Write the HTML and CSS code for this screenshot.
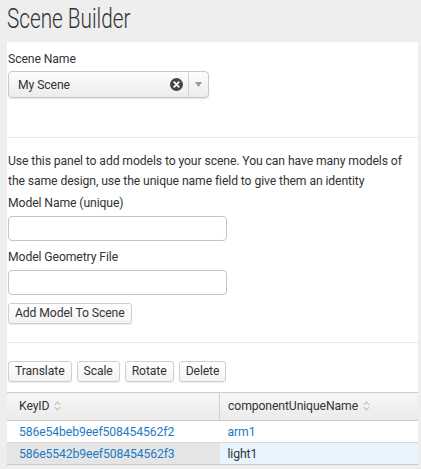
FILE: index.html
```html
<!DOCTYPE html>
<html>
<head>
<meta charset="utf-8">
<link rel="stylesheet" href="styles.css">
</head>
<body>
<header class="top">
  <h1 class="title">Scene Builder</h1>
</header>
<main class="panel">
  <section class="sec sec-scene">
    <label class="lbl">Scene Name</label>
    <div class="select">
      <span class="select-value">My Scene</span>
      <span class="select-clear">
        <svg width="13" height="13" viewBox="0 0 13 13"><circle cx="6.5" cy="6.5" r="6.5" fill="#444"/><path d="M4.2 4.2 L8.8 8.8 M8.8 4.2 L4.2 8.8" stroke="#fff" stroke-width="1.8" stroke-linecap="round"/></svg>
      </span>
      <span class="select-arrow">
        <svg width="7" height="5" viewBox="0 0 7 5"><path d="M0 0 H7 L3.5 5 Z" fill="#999"/></svg>
      </span>
    </div>
  </section>
  <section class="sec sec-model">
    <p class="desc">Use this panel to add models to your scene. You can have many models of the same design, use the unique name field to give them an identity</p>
    <label class="lbl">Model Name (unique)</label>
    <input class="inp" type="text">
    <label class="lbl">Model Geometry File</label>
    <input class="inp" type="text">
    <button class="btn">Add Model To Scene</button>
  </section>
  <section class="sec sec-table">
    <div class="btns">
      <button class="btn">Translate</button>
      <button class="btn">Scale</button>
      <button class="btn">Rotate</button>
      <button class="btn">Delete</button>
    </div>
    <table class="tbl">
      <thead>
        <tr>
          <th class="c1">KeyID <span class="sort"><svg width="7" height="10" viewBox="0 0 7 10"><path d="M0.8 4 L3.5 1 L6.2 4 M0.8 6 L3.5 9 L6.2 6" fill="none" stroke="#bbb" stroke-width="1.1"/></svg></span></th>
          <th class="c2">componentUniqueName <span class="sort"><svg width="7" height="10" viewBox="0 0 7 10"><path d="M0.8 4 L3.5 1 L6.2 4 M0.8 6 L3.5 9 L6.2 6" fill="none" stroke="#bbb" stroke-width="1.1"/></svg></span></th>
        </tr>
      </thead>
      <tbody>
        <tr>
          <td class="c1 link">586e54beb9eef508454562f2</td>
          <td class="c2 link">arm1</td>
        </tr>
        <tr class="sel">
          <td class="c1 link">586e5542b9eef508454562f3</td>
          <td class="c2">light1</td>
        </tr>
      </tbody>
    </table>
  </section>
</main>
</body>
</html>
```

FILE: styles.css
```css
html, body {
  margin: 0;
  padding: 0;
}
body {
  background: #eeeeee;
  font-family: Roboto, "Liberation Sans", sans-serif;
  font-size: 12.2px;
  letter-spacing: -0.1px;
  color: #333;
  height: 469px;
  overflow: hidden;
}
.top {
  height: 42px;
  padding: 0 7px;
}
.title {
  margin: 0;
  font-size: 28px;
  font-weight: 300;
  line-height: 38px;
  letter-spacing: 0;
  color: #333;
  transform: scaleX(0.74);
  transform-origin: left center;
}
.panel {
  background: #fff;
  margin: 0 3px 0 7px;
}
.sec {
  display: flex;
  flex-direction: column;
  align-items: flex-start;
  padding: 0 0 0 1px;
}
.sec-scene {
  padding-top: 9px;
  height: 86px;
  border-bottom: 1px solid #ececec;
}
.lbl {
  display: block;
  line-height: 16px;
  margin-bottom: 4px;
  color: #333;
}
.select {
  width: 199px;
  height: 25px;
  border: 1px solid #c8c8c8;
  border-radius: 4px;
  background: linear-gradient(#fdfdfd, #ececec);
  box-shadow: 0 1px 1px rgba(0,0,0,0.12);
  display: flex;
  align-items: center;
  box-sizing: content-box;
}
.select-value {
  flex: 1;
  padding-left: 9px;
  color: #333;
}
.select-clear {
  display: flex;
  width: 13px;
  height: 13px;
  margin-right: 5px;
}
.select-arrow {
  display: flex;
  align-items: center;
  justify-content: center;
  width: 19px;
  height: 25px;
  border-left: 1px solid #d2d2d2;
}
.sec-model {
  padding-top: 13px;
  height: 191px;
  border-bottom: 1px solid #ececec;
}
.desc {
  margin: 0 0 4px 0;
  line-height: 20px;
  color: #333;
}
.sec-model .lbl {
  margin-bottom: 5px;
}
.inp {
  width: 219px;
  height: 25px;
  box-sizing: border-box;
  border: 1px solid #c4c4c4;
  border-radius: 4px;
  background: #fff;
  margin: 0 0 8px 0;
  padding: 0 6px;
  font: inherit;
}
.btn {
  font-family: Roboto, "Liberation Sans", sans-serif;
  font-size: 12.2px;
  letter-spacing: -0.1px;
  color: #333;
  height: 21px;
  padding: 0 6px;
  border: 1px solid #cfcfcf;
  border-radius: 3px;
  background: linear-gradient(#ffffff, #f3f3f3);
  box-shadow: 0 1px 1px rgba(0,0,0,0.08);
  line-height: 19px;
}
.sec-table {
  padding-top: 18px;
  padding-left: 0;
}
.btns {
  display: flex;
  gap: 5px;
  padding-left: 1px;
  margin-bottom: 10px;
}
.tbl {
  width: 411px;
  border-collapse: collapse;
  margin-bottom: 0;
}
.tbl th {
  height: 27px;
  text-align: left;
  font-weight: 400;
  color: #333;
  background: linear-gradient(#f7f7f7, #eaeaea);
  border-top: 1px solid #cfcfcf;
  border-bottom: 1px solid #cfcfcf;
  padding: 0 0 0 12px;
}
.tbl th.c1 {
  width: 200px;
  border-right: 1px solid #d0d0d0;
}
.tbl th.c2 {
  padding-left: 8px;
}
.sort {
  display: inline-block;
  vertical-align: -1px;
  margin-left: 2px;
}
.tbl td {
  height: 21px;
  padding: 0 0 0 12px;
  border-bottom: 1px solid #d8d8d8;
}
.tbl td.c2 {
  padding-left: 8px;
}
.link {
  color: #1e7bc2;
}
.sel td.c1 {
  background: #e5e5e5;
}
.sel td.c2 {
  background: #e8f4fd;
  color: #333;
}
.sel td {
  border-bottom: 1px solid #c8c8c8;
}
```
